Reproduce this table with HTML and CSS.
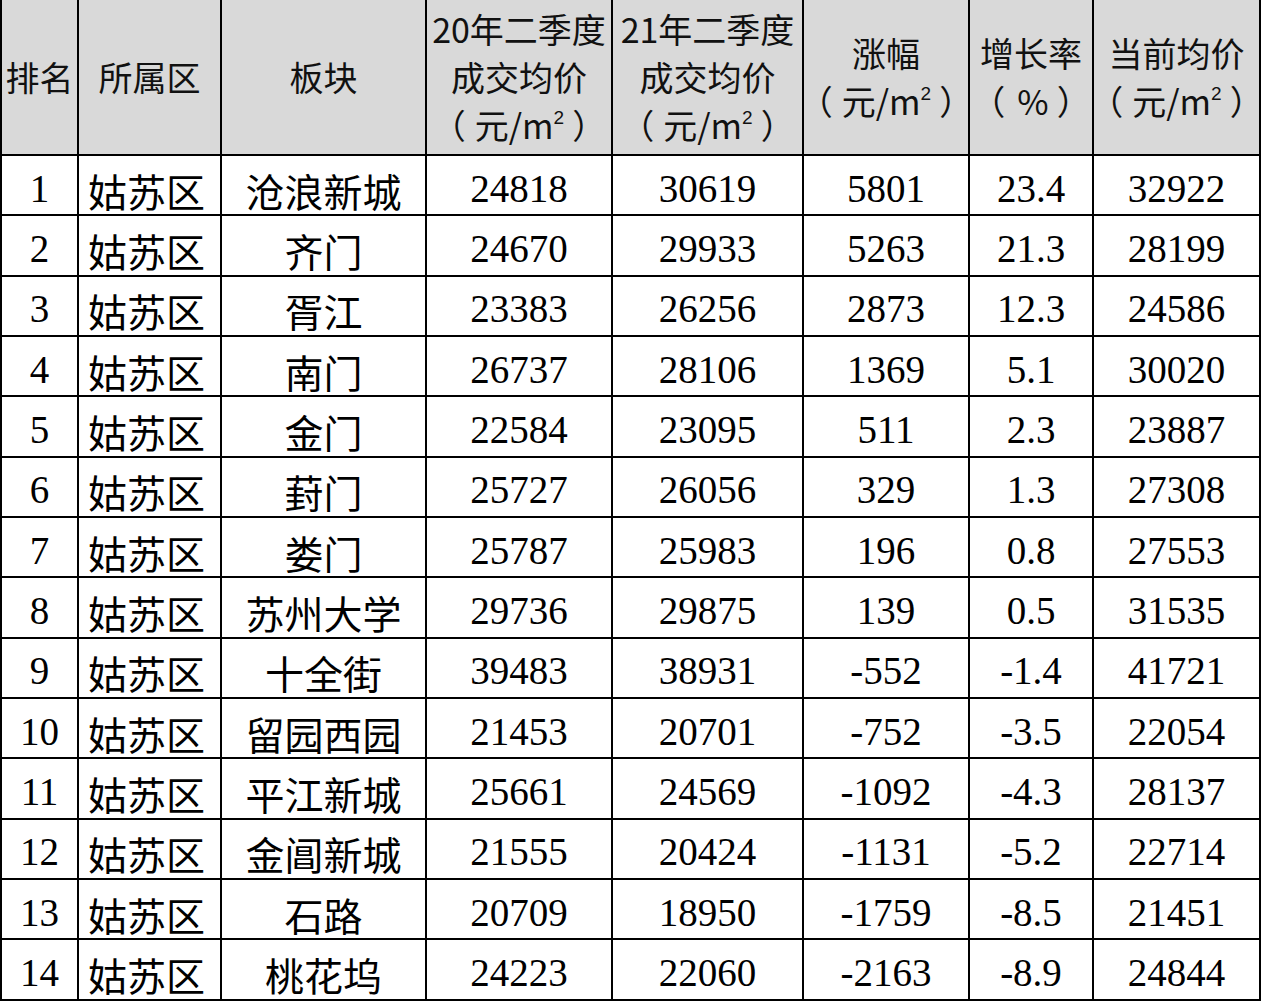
FILE: index.html
```html
<!DOCTYPE html>
<html lang="zh-CN">
<head>
<meta charset="utf-8">
<title>姑苏区板块成交均价</title>
<link rel="stylesheet" href="styles.css">
</head>
<body>
<div class="sheet">
  <div class="hd"><span>排名</span></div>
  <div class="hd"><span>所属区</span></div>
  <div class="hd"><span>板块</span></div>
  <div class="hd"><span>20年二季度<br>成交均价<br><span class="pl">（</span>元/m<sup>2</sup><span class="pr">）</span></span></div>
  <div class="hd"><span>21年二季度<br>成交均价<br><span class="pl">（</span>元/m<sup>2</sup><span class="pr">）</span></span></div>
  <div class="hd"><span>涨幅<br><span class="pl">（</span>元/m<sup>2</sup><span class="pr">）</span></span></div>
  <div class="hd"><span>增长率<br><span class="pl pct">（</span>%<span class="pr">）</span></span></div>
  <div class="hd"><span>当前均价<br><span class="pl">（</span>元/m<sup>2</sup><span class="pr">）</span></span></div>

  <div class="c num">1</div><div class="c zh dist">姑苏区</div><div class="c zh">沧浪新城</div><div class="c num">24818</div><div class="c num">30619</div><div class="c num">5801</div><div class="c num">23.4</div><div class="c num">32922</div>
  <div class="c num">2</div><div class="c zh dist">姑苏区</div><div class="c zh">齐门</div><div class="c num">24670</div><div class="c num">29933</div><div class="c num">5263</div><div class="c num">21.3</div><div class="c num">28199</div>
  <div class="c num">3</div><div class="c zh dist">姑苏区</div><div class="c zh">胥江</div><div class="c num">23383</div><div class="c num">26256</div><div class="c num">2873</div><div class="c num">12.3</div><div class="c num">24586</div>
  <div class="c num">4</div><div class="c zh dist">姑苏区</div><div class="c zh">南门</div><div class="c num">26737</div><div class="c num">28106</div><div class="c num">1369</div><div class="c num">5.1</div><div class="c num">30020</div>
  <div class="c num">5</div><div class="c zh dist">姑苏区</div><div class="c zh">金门</div><div class="c num">22584</div><div class="c num">23095</div><div class="c num">511</div><div class="c num">2.3</div><div class="c num">23887</div>
  <div class="c num">6</div><div class="c zh dist">姑苏区</div><div class="c zh">葑门</div><div class="c num">25727</div><div class="c num">26056</div><div class="c num">329</div><div class="c num">1.3</div><div class="c num">27308</div>
  <div class="c num">7</div><div class="c zh dist">姑苏区</div><div class="c zh">娄门</div><div class="c num">25787</div><div class="c num">25983</div><div class="c num">196</div><div class="c num">0.8</div><div class="c num">27553</div>
  <div class="c num">8</div><div class="c zh dist">姑苏区</div><div class="c zh">苏州大学</div><div class="c num">29736</div><div class="c num">29875</div><div class="c num">139</div><div class="c num">0.5</div><div class="c num">31535</div>
  <div class="c num">9</div><div class="c zh dist">姑苏区</div><div class="c zh">十全街</div><div class="c num">39483</div><div class="c num">38931</div><div class="c num">-552</div><div class="c num">-1.4</div><div class="c num">41721</div>
  <div class="c num">10</div><div class="c zh dist">姑苏区</div><div class="c zh">留园西园</div><div class="c num">21453</div><div class="c num">20701</div><div class="c num">-752</div><div class="c num">-3.5</div><div class="c num">22054</div>
  <div class="c num">11</div><div class="c zh dist">姑苏区</div><div class="c zh">平江新城</div><div class="c num">25661</div><div class="c num">24569</div><div class="c num">-1092</div><div class="c num">-4.3</div><div class="c num">28137</div>
  <div class="c num">12</div><div class="c zh dist">姑苏区</div><div class="c zh">金阊新城</div><div class="c num">21555</div><div class="c num">20424</div><div class="c num">-1131</div><div class="c num">-5.2</div><div class="c num">22714</div>
  <div class="c num">13</div><div class="c zh dist">姑苏区</div><div class="c zh">石路</div><div class="c num">20709</div><div class="c num">18950</div><div class="c num">-1759</div><div class="c num">-8.5</div><div class="c num">21451</div>
  <div class="c num">14</div><div class="c zh dist">姑苏区</div><div class="c zh">桃花坞</div><div class="c num">24223</div><div class="c num">22060</div><div class="c num">-2163</div><div class="c num">-8.9</div><div class="c num">24844</div>
</div>
</body>
</html>
```
FILE: styles.css
```css
html, body {
  margin: 0;
  padding: 0;
  background: #ffffff;
}

.sheet {
  display: grid;
  grid-template-columns: 77px 143px 205px 186px 191px 166px 124px 167px;
  grid-template-rows: 156px repeat(14, 60.33px);
  width: 1261px;
  border-left: 2px solid #000;
  box-sizing: content-box;
  color: #000;
}

.hd,
.c {
  box-sizing: border-box;
  border-right: 2px solid #000;
  border-bottom: 2px solid #000;
  display: flex;
  align-items: center;
  justify-content: center;
  overflow: visible;
  white-space: nowrap;
}

.hd {
  background: #d9d9d9;
  font-family: "Noto Sans CJK SC", "Noto Sans", sans-serif;
  font-size: 34px;
  line-height: 48px;
  text-align: center;
  color: #111;
}

.hd sup {
  font-family: "Liberation Sans", Arial, sans-serif;
  font-size: 0.56em;
  line-height: 0;
  vertical-align: 0.8em;
}

.pl {
  margin-right: 9px;
}

.pl.pct {
  margin-right: 12px;
}

.pr {
  margin-left: 8px;
}

.num {
  font-family: "Liberation Serif", "Times New Roman", serif;
  font-size: 39px;
  line-height: 1;
  padding-top: 6px;
}

.zh {
  font-family: "Noto Sans CJK SC", "Noto Sans", sans-serif;
  font-size: 39px;
  line-height: 1;
  padding-top: 10px;
}

.dist {
  justify-content: flex-start;
  padding-left: 9px;
}
```
